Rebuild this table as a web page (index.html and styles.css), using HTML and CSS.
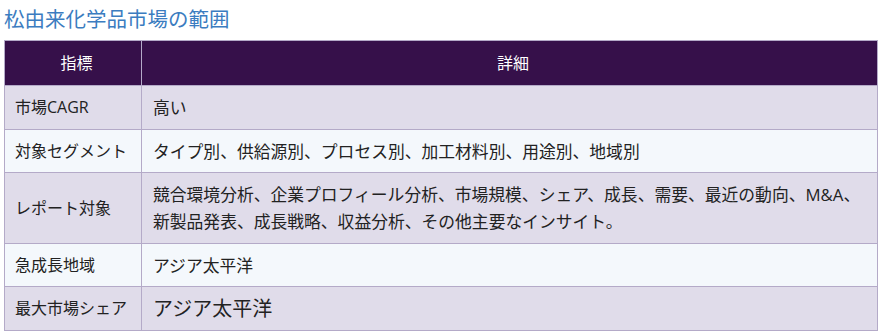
FILE: index.html
```html
<!DOCTYPE html>
<html lang="ja">
<head>
<meta charset="utf-8">
<link rel="stylesheet" href="styles.css">
</head>
<body>
<h2 class="title">松由来化学品市場の範囲</h2>
<table class="scope">
  <thead>
    <tr><th class="c1">指標</th><th>詳細</th></tr>
  </thead>
  <tbody>
    <tr class="odd"><td class="c1">市場CAGR</td><td>高い</td></tr>
    <tr class="even"><td class="c1">対象セグメント</td><td>タイプ別、供給源別、プロセス別、加工材料別、用途別、地域別</td></tr>
    <tr class="odd"><td class="c1">レポート対象</td><td>競合環境分析、企業プロフィール分析、市場規模、シェア、成長、需要、最近の動向、M&amp;A、新製品発表、成長戦略、収益分析、その他主要なインサイト。</td></tr>
    <tr class="even"><td class="c1">急成長地域</td><td>アジア太平洋</td></tr>
    <tr class="odd"><td class="c1">最大市場シェア</td><td class="big">アジア太平洋</td></tr>
  </tbody>
</table>
</body>
</html>
```
FILE: styles.css
```css
body {
  margin: 4px 5px 0 4px;
  font-family: "Noto Sans", "Noto Sans CJK JP", sans-serif;
  color: #222;
  background: #fff;
}
.title {
  margin: 0 0 8px 0;
  font-size: 20.5px;
  font-weight: normal;
  line-height: 28px;
  color: #3b7cc0;
  font-family: "Noto Sans CJK JP", sans-serif;
}
.scope {
  width: 874px;
  border-collapse: collapse;
  font-size: 16px;
  font-family: "Open Sans", "Noto Sans CJK JP", sans-serif;
}
.scope th, .scope td {
  border: 1px solid #b4aac8;
  padding: 8px 4px 7.5px 11px;
  line-height: 27px;
  text-align: left;
  vertical-align: middle;
  font-size: 16.8px;
}
.scope th {
  background: #36104a;
  color: #fff;
  font-weight: normal;
  text-align: center;
  font-size: 16px;
  padding-top: 9px;
  padding-bottom: 8px;
}
.scope .c1 {
  width: 121px;
  white-space: nowrap;
}
.scope td.c1 { padding-left: 10px; font-size: 16px; }
.odd td { background: #e0dcea; }
.even td { background: #f4f8fc; }
.scope td.big { font-size: 20px; }
```
